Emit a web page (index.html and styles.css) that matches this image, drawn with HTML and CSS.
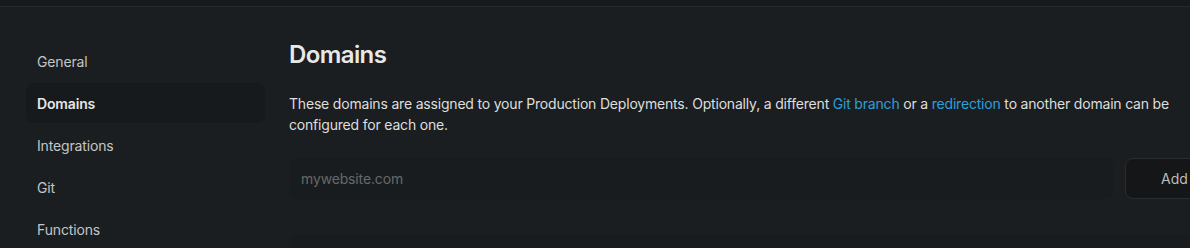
FILE: index.html
```html
<!DOCTYPE html>
<html lang="en">
<head>
<meta charset="utf-8">
<title>Domains</title>
<link rel="stylesheet" href="styles.css">
</head>
<body>
<div class="topbar"></div>
<div class="layout">
  <nav class="sidebar">
    <a class="nav-item">General</a>
    <a class="nav-item active">Domains</a>
    <a class="nav-item">Integrations</a>
    <a class="nav-item">Git</a>
    <a class="nav-item">Functions</a>
  </nav>
  <main class="main">
    <h1 class="title">Domains</h1>
    <p class="desc">These domains are assigned to your Production Deployments. Optionally, a different <a class="link">Git branch</a> or a <a class="link">redirection</a> to another domain can be configured for each one.</p>
    <div class="add-row">
      <input class="domain-input" type="text" placeholder="mywebsite.com">
      <button class="add-btn">Add</button>
    </div>
    <div class="card"></div>
  </main>
</div>
</body>
</html>
```
FILE: styles.css
```css
html, body {
  margin: 0;
  padding: 0;
  overflow: hidden;
  background: #1b1e20;
  height: 248px;
}
body {
  font-family: Inter, "Noto Sans", sans-serif;
  color: #d6d6d6;
}
.topbar {
  height: 6px;
  background: #161a1a;
  border-bottom: 1px solid #262a2b;
}
.layout {
  display: flex;
  gap: 24px;
  padding-left: 26px;
}
.sidebar {
  flex: 0 0 239px;
  display: flex;
  flex-direction: column;
  gap: 2px;
  padding-top: 34px;
}
.nav-item {
  display: flex;
  align-items: center;
  height: 40px;
  padding-left: 11px;
  font-size: 14px;
  letter-spacing: -0.15px;
  color: #c4c5c6;
  border-radius: 8px;
}
.nav-item.active {
  background: #171a1c;
  color: #e6e6e6;
  font-weight: 600;
}
.main {
  flex: 0 0 940px;
  padding-top: 32px;
}
.title {
  margin: 0;
  font-size: 24px;
  line-height: 32px;
  font-weight: 600;
  color: #e8e8e8;
  letter-spacing: -0.6px;
}
.desc {
  margin: 22px 0 0;
  font-size: 14px;
  line-height: 21px;
  letter-spacing: -0.19px;
  color: #dedede;
}
.link {
  color: #2b9fdc;
}
.add-row {
  display: flex;
  gap: 12px;
  margin-top: 23px;
}
.domain-input {
  flex: 1;
  height: 41px;
  box-sizing: border-box;
  border: none;
  border-radius: 6px;
  background: #191c1e;
  padding: 0 12px;
  font-family: inherit;
  font-size: 14px;
  letter-spacing: -0.15px;
  color: #d6d6d6;
  outline: none;
}
.domain-input::placeholder {
  color: #66696b;
}
.add-btn {
  flex: 0 0 104px;
  height: 41px;
  box-sizing: border-box;
  border: 1px solid #2a2d30;
  border-radius: 8px;
  background: #141618;
  color: #bdbdbd;
  font-family: inherit;
  font-size: 14px;
  text-align: left;
  padding-left: 35px;
}
.card {
  margin-top: 35px;
  height: 60px;
  border-radius: 8px;
  background: #191c1e;
}
```
